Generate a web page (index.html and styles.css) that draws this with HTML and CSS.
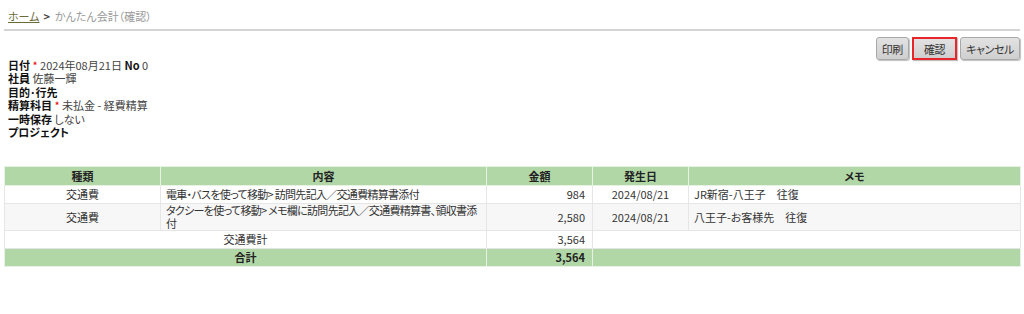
FILE: index.html
```html
<!DOCTYPE html>
<html lang="ja">
<head>
<meta charset="utf-8">
<title>かんたん会計（確認）</title>
<link rel="stylesheet" href="styles.css">
</head>
<body>
<div class="page">
  <div class="crumbs"><a class="home" href="#">ホーム</a><span class="sep">&gt;</span><span class="cur">かんたん会計（確認）</span></div>
  <div class="toolbar">
    <button class="btn">印刷</button>
    <button class="btn btn-active">確認</button>
    <button class="btn">キャンセル</button>
  </div>
  <div class="info">
    <div class="line"><b>日付</b> <span class="req">*</span> 2024年08月21日 <b>No</b> 0</div>
    <div class="line"><b>社員</b> 佐藤一輝</div>
    <div class="line"><b>目的･行先</b></div>
    <div class="line"><b>精算科目</b> <span class="req">*</span> 未払金 - 経費精算</div>
    <div class="line"><b>一時保存</b> しない</div>
    <div class="line"><b>プロジェクト</b></div>
  </div>
  <table class="grid">
    <colgroup>
      <col class="c1"><col class="c2"><col class="c3"><col class="c4"><col class="c5">
    </colgroup>
    <thead>
      <tr><th>種類</th><th>内容</th><th>金額</th><th>発生日</th><th>メモ</th></tr>
    </thead>
    <tbody>
      <tr>
        <td class="ctr">交通費</td>
        <td class="desc">電車・バスを使って移動&gt; 訪問先記入／交通費精算書添付</td>
        <td class="num">984</td>
        <td class="ctr">2024/08/21</td>
        <td>JR新宿-八王子　往復</td>
      </tr>
      <tr class="alt">
        <td class="ctr">交通費</td>
        <td class="desc">タクシーを使って移動&gt; メモ欄に訪問先記入／交通費精算書、領収書添付</td>
        <td class="num">2,580</td>
        <td class="ctr">2024/08/21</td>
        <td>八王子-お客様先　往復</td>
      </tr>
      <tr>
        <td class="ctr" colspan="2">交通費計</td>
        <td class="num">3,564</td>
        <td colspan="2"></td>
      </tr>
      <tr class="total">
        <td class="ctr" colspan="2">合計</td>
        <td class="num">3,564</td>
        <td colspan="2"></td>
      </tr>
    </tbody>
  </table>
</div>
</body>
</html>
```

FILE: styles.css
```css
html, body {
  margin: 0;
  padding: 0;
  background: #fff;
}
body {
  font-family: "Noto Sans CJK JP", "Noto Sans", sans-serif;
  font-size: 11px;
  color: #333;
  font-feature-settings: "palt";
}
.page {
  padding: 0 4px;
}
.crumbs {
  padding: 8px 4px 0;
  height: 21px;
  line-height: 16px;
  border-bottom: 2px solid #d4d4d4;
  color: #999;
}
.home {
  color: #6b6b3a;
  text-decoration: underline;
}
.sep {
  color: #444;
  font-weight: bold;
  margin: 0 5px 0 4px;
}
.toolbar {
  display: flex;
  justify-content: flex-end;
  gap: 3px;
  padding-top: 6px;
}
.btn {
  font-family: inherit;
  font-feature-settings: "palt";
  font-size: 11px;
  letter-spacing: -0.4px;
  color: #333;
  height: 23px;
  padding: 0 5px;
  background: linear-gradient(#e2e2e2, #cfcfcf);
  border: 1px solid #a9a9a9;
  border-radius: 3px;
  box-shadow: 1px 1px 1px rgba(0,0,0,0.25);
}
.btn-active {
  border: 2px solid #e8262a;
  border-radius: 0;
  padding: 0 10px;
}
.info {
  padding: 0 4px;
  margin-top: -1px;
}
.line {
  line-height: 13.4px;
  height: 13.4px;
  color: #444;
}
.line b {
  color: #111;
}
.req {
  color: #e60000;
}
.grid {
  margin-top: 27px;
  width: 1016px;
  border-collapse: collapse;
  table-layout: fixed;
}
.c1 { width: 156px; }
.c2 { width: 326px; }
.c3 { width: 106px; }
.c4 { width: 96px; }
.c5 { width: 332px; }
.grid th, .grid td {
  border: 1px solid #e6e6e6;
  padding: 0 5px;
  line-height: 13px;
  height: 17px;
  vertical-align: middle;
  text-align: left;
}
.grid th {
  background: #b2d7a7;
  font-weight: bold;
  text-align: center;
  color: #222;
  border-color: #e8f2e4;
  height: 18px;
}
.grid td.desc { letter-spacing: -0.7px; }
.grid td.ctr { text-align: center; }
.grid td.num { text-align: right; padding-right: 7px; }
.grid tr.alt td { background: #f7f7f7; }
.grid tr.total td {
  background: #b2d7a7;
  font-weight: bold;
  color: #222;
  border-color: #e8f2e4;
}
```
